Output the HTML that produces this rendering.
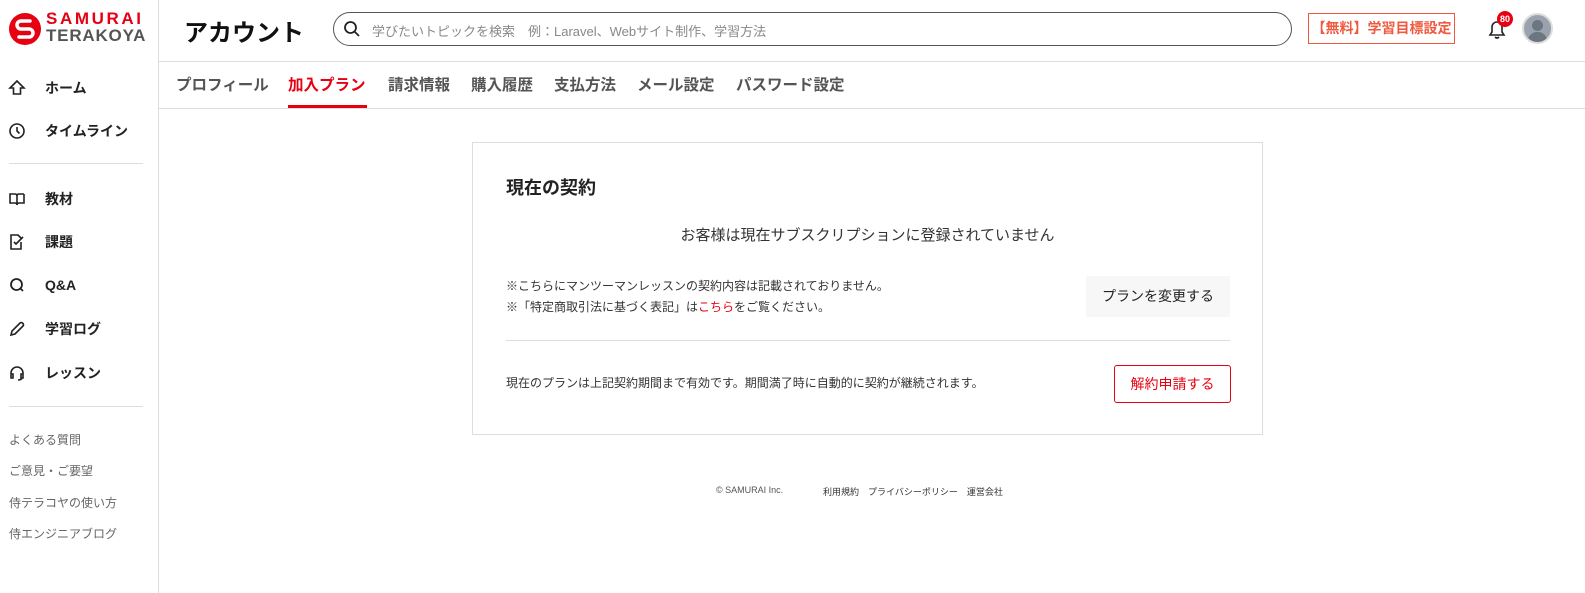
<!DOCTYPE html>
<html><head><meta charset="utf-8"><style>
*{margin:0;padding:0;box-sizing:border-box}
body{width:1585px;height:593px;background:#fff;font-family:"Liberation Sans","Noto Sans CJK JP",sans-serif;color:#222;position:relative;overflow:hidden}
.abs{position:absolute}
.side{left:0;top:0;width:159px;height:593px;border-right:1px solid #ddd}
.nav{position:absolute;left:8px;display:flex;align-items:center;font-size:14px;font-weight:bold;color:#222}
.nav svg{width:18px;height:18px;margin-right:19px}
.sub{position:absolute;left:9px;font-size:12px;color:#666}
.tab{position:absolute;top:73px;font-size:15.5px;font-weight:bold;color:#555}
</style></head><body>
<div class="abs side"></div>
<!-- logo -->
<svg class="abs" style="left:8px;top:12px" width="34" height="34" viewBox="0 0 34 34"><circle cx="17" cy="17" r="16" fill="#e60012"/><path d="M22 9 L13 9 A4 4 0 0 0 13 17 L21 17 A4 4 0 0 1 21 25 L11 25" fill="none" stroke="#fff" stroke-width="3.5" stroke-linecap="round"/></svg>
<div class="abs" style="left:46px;top:10px;font-size:17px;font-weight:bold;color:#e60012;letter-spacing:2.6px;line-height:18px">SAMURAI</div>
<div class="abs" style="left:46px;top:27px;font-size:17px;font-weight:bold;color:#555;letter-spacing:0.8px;line-height:18px">TERAKOYA</div>

<div class="nav" style="top:78px"><svg viewBox="0 0 18 18" fill="none" stroke="#222" stroke-width="1.6"><path d="M9 2 L2 9 H5.5 V15 H12.5 V9 H16 Z"/></svg>ホーム</div>
<div class="nav" style="top:121px"><svg viewBox="0 0 18 18" fill="none" stroke="#222" stroke-width="1.6"><circle cx="9" cy="9" r="7"/><path d="M9 5 V9 L11.5 11.5"/></svg>タイムライン</div>
<div class="abs" style="left:9px;top:163px;width:134px;height:1px;background:#ddd"></div>
<div class="nav" style="top:189px"><svg viewBox="0 0 18 18" fill="none" stroke="#222" stroke-width="1.6"><path d="M2 4 H7 Q9 4 9 6 V15 Q9 13 7 13 H2 Z M16 4 H11 Q9 4 9 6 M16 4 V13 H11 Q9 13 9 15"/></svg>教材</div>
<div class="nav" style="top:232px"><svg viewBox="0 0 18 18" fill="none" stroke="#222" stroke-width="1.6"><path d="M13 9 V16 H3 V2 H10 L13 5"/><path d="M6 9 L8 11 L15 4"/></svg>課題</div>
<div class="nav" style="top:276px"><svg viewBox="0 0 18 18" fill="none" stroke="#222" stroke-width="1.8"><circle cx="8.5" cy="8.5" r="5.5"/><path d="M12 12 L15 15"/></svg>Q&amp;A</div>
<div class="nav" style="top:319px"><svg viewBox="0 0 18 18" fill="none" stroke="#222" stroke-width="1.6"><path d="M3 15 L4 11 L12 3 Q13.5 2 15 3.5 Q16 5 15 6 L7 14 Z"/></svg>学習ログ</div>
<div class="nav" style="top:363px"><svg viewBox="0 0 18 18" fill="none" stroke="#222" stroke-width="1.6"><path d="M3 12 V9 A6 6 0 0 1 15 9 V12 M3 10 H5 V14 H3 Z M13 10 H15 V14 H13 Z M14 14 Q13 16 10 16"/></svg>レッスン</div>
<div class="abs" style="left:9px;top:406px;width:134px;height:1px;background:#ddd"></div>
<div class="sub" style="top:431px">よくある質問</div>
<div class="sub" style="top:462px">ご意見・ご要望</div>
<div class="sub" style="top:494px">侍テラコヤの使い方</div>
<div class="sub" style="top:525px">侍エンジニアブログ</div>

<!-- header -->
<div class="abs" style="left:184px;top:13px;font-size:24px;font-weight:bold;color:#111">アカウント</div>
<div class="abs" style="left:333px;top:12px;width:959px;height:34px;border:1px solid #555;border-radius:17px"></div>
<svg class="abs" style="left:343px;top:20px" width="18" height="18" viewBox="0 0 18 18" fill="none" stroke="#222" stroke-width="1.8"><circle cx="7.5" cy="7.5" r="5.5"/><path d="M11.5 11.5 L16 16"/></svg>
<div class="abs" style="left:372px;top:21px;font-size:13px;color:#888">学びたいトピックを検索　例：Laravel、Webサイト制作、学習方法</div>
<div class="abs" style="left:1308px;top:13px;width:147px;height:31px;border:1px solid #f0593e;color:#f0593e;font-size:14px;font-weight:bold;text-align:center;line-height:29px">【無料】学習目標設定</div>
<svg class="abs" style="left:1486px;top:17px" width="22" height="24" viewBox="0 0 22 24" fill="none" stroke="#222" stroke-width="1.6"><path d="M4 18 H18 L16 15 V10 A5 5 0 0 0 6 10 V15 Z M9 20 Q11 22 13 20"/></svg>
<div class="abs" style="left:1497px;top:11px;width:16px;height:16px;border-radius:8px;background:#e60012;color:#fff;font-size:9px;font-weight:bold;text-align:center;line-height:16px">80</div>
<div class="abs" style="left:1522px;top:13px;width:31px;height:31px;border-radius:50%;background:#9aa3ad;border:2px solid #ddd;overflow:hidden"><div style="position:absolute;left:8px;top:5px;width:11px;height:11px;border-radius:50%;background:#6c7680"></div><div style="position:absolute;left:4px;top:17px;width:19px;height:14px;border-radius:9px 9px 0 0;background:#6c7680"></div></div>
<div class="abs" style="left:159px;top:61px;width:1426px;height:1px;background:#ddd"></div>

<!-- tabs -->
<div class="tab" style="left:176px">プロフィール</div>
<div class="tab" style="left:288px;color:#e60012">加入プラン</div>
<div class="abs" style="left:288px;top:105px;width:79px;height:3px;background:#e60012"></div>
<div class="tab" style="left:388px">請求情報</div>
<div class="tab" style="left:471px">購入履歴</div>
<div class="tab" style="left:554px">支払方法</div>
<div class="tab" style="left:637px">メール設定</div>
<div class="tab" style="left:736px">パスワード設定</div>
<div class="abs" style="left:159px;top:108px;width:1426px;height:1px;background:#ddd"></div>

<!-- card -->
<div class="abs" style="left:472px;top:142px;width:791px;height:293px;border:1px solid #ddd"></div>
<div class="abs" style="left:506px;top:174px;font-size:18px;font-weight:bold;color:#222">現在の契約</div>
<div class="abs" style="left:472px;top:224px;width:791px;text-align:center;font-size:15px;color:#333">お客様は現在サブスクリプションに登録されていません</div>
<div class="abs" style="left:506px;top:276px;font-size:12px;color:#333;line-height:21px">※こちらにマンツーマンレッスンの契約内容は記載されておりません。<br>※「特定商取引法に基づく表記」は<span style="color:#e60012">こちら</span>をご覧ください。</div>
<div class="abs" style="left:1086px;top:276px;width:144px;height:41px;background:#f7f7f7;font-size:14px;color:#222;text-align:center;line-height:41px">プランを変更する</div>
<div class="abs" style="left:506px;top:340px;width:724px;height:1px;background:#ddd"></div>
<div class="abs" style="left:506px;top:374px;font-size:12px;color:#333">現在のプランは上記契約期間まで有効です。期間満了時に自動的に契約が継続されます。</div>
<div class="abs" style="left:1114px;top:365px;width:117px;height:38px;border:1px solid #e60012;border-radius:3px;color:#e60012;font-size:14px;text-align:center;line-height:36px">解約申請する</div>

<div class="abs" style="left:716px;top:485px;font-size:9px;color:#555">© SAMURAI Inc.</div>
<div class="abs" style="left:823px;top:485px;font-size:9px;color:#333">利用規約　プライバシーポリシー　運営会社</div>
</body></html>
